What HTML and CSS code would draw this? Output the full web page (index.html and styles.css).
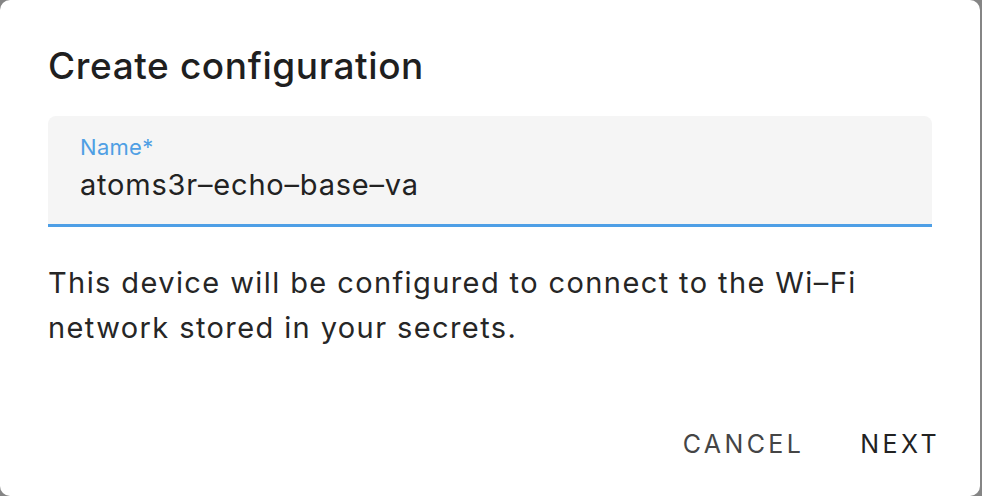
FILE: index.html
```html
<!DOCTYPE html>
<html>
<head>
<meta charset="utf-8">
<link rel="stylesheet" href="styles.css">
</head>
<body>
<div class="dialog">
  <h2 class="title">Create configuration</h2>
  <div class="field">
    <span class="label">Name*</span>
    <span class="value">atoms3r–echo–base–va</span>
  </div>
  <p class="text">This device will be configured to connect to the Wi–Fi network stored in your secrets.</p>
  <div class="actions">
    <span class="btn cancel">CANCEL</span>
    <span class="btn next">NEXT</span>
  </div>
</div>
</body>
</html>
```
FILE: styles.css
```css
html, body {
  margin: 0;
  padding: 0;
  height: 100%;
  background: #858585;
  overflow: hidden;
}
.dialog {
  box-sizing: border-box;
  width: 980px;
  height: 496px;
  background: #fff;
  border-radius: 10px;
  padding: 0 48px;
  display: flex;
  flex-direction: column;
  font-family: Inter, Roboto, sans-serif;
}
.title {
  margin: 42px 0 0;
  font-size: 37px;
  font-weight: 500;
  line-height: 48px;
  color: #1f1f1f;
  letter-spacing: 0.6px;
}
.field {
  margin-top: 26px;
  box-sizing: border-box;
  height: 111px;
  background: #f5f5f5;
  border-radius: 8px 8px 0 0;
  border-bottom: 3px solid #4e9fe6;
  padding: 17px 32px 0;
  display: flex;
  flex-direction: column;
}
.label {
  font-size: 22px;
  line-height: 28px;
  color: #4f9fe4;
  letter-spacing: 0.3px;
}
.value {
  margin-top: 5px;
  font-size: 29px;
  line-height: 38px;
  color: #222;
  letter-spacing: 0.8px;
}
.text {
  margin: 33px 0 0;
  font-size: 29px;
  line-height: 45px;
  color: #262626;
  letter-spacing: 1.4px;
}
.actions {
  margin-top: auto;
  margin-bottom: 32px;
  margin-right: -8px;
  display: flex;
  justify-content: flex-end;
  gap: 56px;
}
.btn {
  font-size: 25px;
  line-height: 40px;
  letter-spacing: 3.4px;
  font-weight: 400;
}
.cancel { color: #454545; }
.next { color: #222; }
```
